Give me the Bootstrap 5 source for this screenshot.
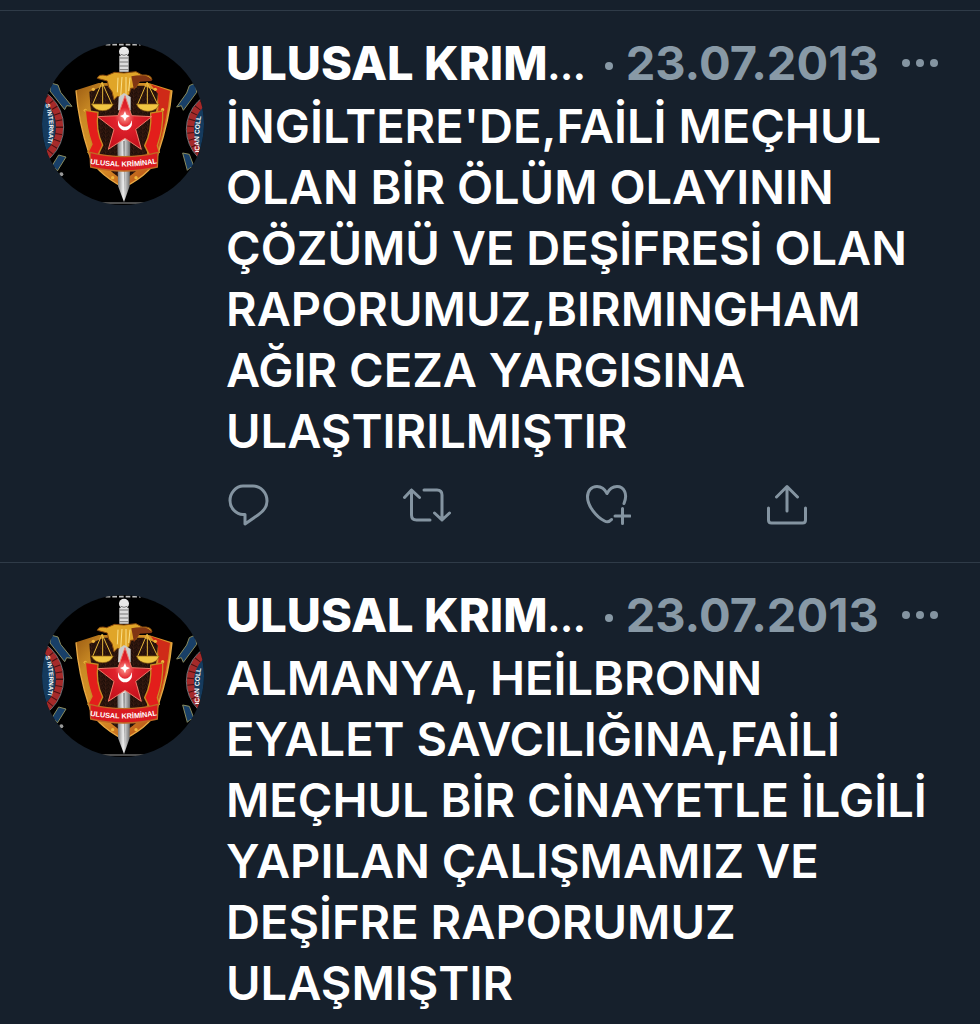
<!DOCTYPE html>
<html lang="tr">
<head>
<meta charset="utf-8">
<meta name="viewport" content="width=device-width, initial-scale=1">
<title>Ulusal Kriminal</title>
<link rel="stylesheet" href="https://cdn.jsdelivr.net/npm/bootstrap@5.3.0/dist/css/bootstrap.min.css">
<style>
  body { background: #16202c; color: #fff; font-family: Inter, "Liberation Sans", sans-serif; }
  .feed { padding-top: 10px; }
  .post { border-top: 1px solid #2f3b48; padding: 20px 40px 34px 42px; gap: 22px; }
  .avatar { width: 162px; height: 162px; margin-top: 12px; }
  .post-head { line-height: 64px; font-size: 47px; }
  .post-name { color: #fff; font-weight: 800; }
  .post-name span { font-size: 36px; line-height: 1; }
  .post-date { color: #8899a6; font-weight: 700; gap: 13px; margin-left: 19px; }
  .post-date i { width: 8px; height: 8px; background: currentColor; margin-top: 6px; }
  .more-btn, .act-btn { color: #8494a1; line-height: 1; }
  .post-text { font-size: 47px; line-height: 61px; font-weight: 600; }
  .actions { margin: 19px -1px 0 -2px; }
  .act-btn svg { fill: none; stroke: currentColor; stroke-width: 3; stroke-linecap: round; stroke-linejoin: round; }
</style>
</head>
<body>
<svg class="position-absolute" width="0" height="0" aria-hidden="true">
  <defs>
    <linearGradient id="gold" x1="0" y1="0" x2="1" y2="1"><stop offset="0" stop-color="#9a5a12"/><stop offset=".2" stop-color="#c98a24"/><stop offset=".5" stop-color="#dd9427"/><stop offset="1" stop-color="#a83a12"/></linearGradient>
    <linearGradient id="blade" x1="0" x2="1" y1="0" y2="0"><stop offset="0" stop-color="#777"/><stop offset=".45" stop-color="#eee"/><stop offset="1" stop-color="#666"/></linearGradient>
    <radialGradient id="starRed" cx=".5" cy=".4" r=".6"><stop offset="0" stop-color="#ff9a90"/><stop offset=".3" stop-color="#e0222c"/><stop offset="1" stop-color="#c4101c"/></radialGradient>
    <pattern id="speck" width="14" height="12" patternUnits="userSpaceOnUse"><rect width="14" height="12" fill="#1d0d08"/><path d="M1 2l4 2M8 1l3 4M3 9l4-2M11 9l2 2" stroke="#6b3520" stroke-width="2"/></pattern>
    <path id="leftArc" d="M34 210Q54 275 38 340"/>
    <path id="rightArc" d="M497 354Q491 290 506 220"/>
    <path id="bannerArc" d="M168 388q104 18 206-2"/>
    <g id="emblem">
      <rect width="540" height="540" fill="#000"/>
      <path d="M215 31h105" stroke="#bbb" stroke-width="5" stroke-dasharray="14 6"/>
      <path d="M185 506h145" stroke="#999" stroke-width="3"/>
      <circle cx="-38" cy="278" r="104" fill="#153b5e"/>
      <circle cx="-38" cy="278" r="115" fill="none" stroke="#a52a2a" stroke-width="22"/>
      <circle cx="-38" cy="278" r="115" fill="none" stroke="#4a1010" stroke-width="22" stroke-dasharray="3 17"/>
      <circle cx="-38" cy="278" r="127" fill="none" stroke="#9aa4ac" stroke-width="2"/>
      <path d="M50 146l22 6 8 22 34 42-16-2-6 12-44-56z" fill="#183f67" stroke="#8a8c60" stroke-width="3"/>
      <path d="M96 368l-22-6-26 42 16-2 6 8z" fill="#183f67" stroke="#8a8c60" stroke-width="3"/>
      <circle cx="82" cy="420" r="6" fill="#999"/>
      <circle cx="575" cy="285" r="100" fill="#153b5e"/>
      <circle cx="575" cy="285" r="106" fill="none" stroke="#a52a2a" stroke-width="22"/>
      <circle cx="575" cy="285" r="106" fill="none" stroke="#4a1010" stroke-width="22" stroke-dasharray="3 17"/>
      <circle cx="575" cy="285" r="118" fill="none" stroke="#9aa4ac" stroke-width="2"/>
      <path d="M484 146l-18 8-8 22-30 42 14-4 6 14 40-54z" fill="#183f67" stroke="#8a8c60" stroke-width="3"/>
      <path d="M446 356l20 4 16 42-14-2-8 8z" fill="#183f67" stroke="#8a8c60" stroke-width="3"/>
      <!-- shield -->
      <path d="M126 168l68-22h150l70 22q-8 90-42 190-8 52-103 102-92-50-104-102-32-98-39-190z" fill="url(#gold)"/>
      <path d="M166 172l44-18h120l42 18q-4 86-32 176-4 50-72 90-66-40-74-90-24-90-28-176z" fill="url(#speck)"/>
      <path d="M350 150l58 20q-8 90-42 188l-12 2q24-100 18-182z" fill="#cf2a18"/>
      <path d="M414 168q-8 90-42 190-8 52-103 102-92-50-104-102-32-98-39-190" fill="none" stroke="#e8a944" stroke-width="4"/>
      <g fill="#efb53c"><circle cx="178" cy="165" r="5"/><circle cx="364" cy="165" r="5"/><circle cx="154" cy="228" r="5"/><circle cx="386" cy="226" r="5"/><circle cx="236" cy="430" r="5"/><circle cx="306" cy="430" r="5"/></g>
      <path d="M154 228l38 6q-8 54 14 98l-16 34-28-12 12-24q-16-44-20-102zM386 230l-36 6q4 54-18 98l16 32 28-12-6-20q18-50 16-104z" fill="#e31e1b" stroke="#c98b23" stroke-width="4"/>
      <!-- eagle and scales -->
      <path d="M190 132q4-14 28-8l24-10 28 2 36-4 18 10q28-2 30 14l-36 2-12 22-16 2-4 18-14 12-22-6-10 10-6-24-10-14-4-18z" fill="#e0a528" stroke="#8b4b0e" stroke-width="3"/>
      <path d="M292 126q54-10 62 14l-38 2-16 26z" fill="#813513"/>
      <path d="M252 130l-2 44M264 128l-4 60M276 128v58M288 130l-4 40" stroke="#fae08a" stroke-width="3"/>
      <path d="M204 144l-28 66M204 144l30 66M206 144v68M339 144l-28 66M339 144l32 66M340 144v68" fill="none" stroke="#e8b93c" stroke-width="3"/>
      <path d="M172 209h66q-8 20-32 20t-34-20zM307 209h69q-8 22-34 22t-35-22z" fill="#f0c542" stroke="#8a5b10" stroke-width="2"/>
      <!-- sword -->
      <path d="M256 64h28v48h-28z" fill="#dcdcdc"/><path d="M256 71h28M256 83h28M256 95h28M256 106h28" stroke="#777" stroke-width="3"/>
      <circle cx="270" cy="52" r="15" fill="#e8e8e8"/><path d="M260 60q10 6 20 0" fill="none" stroke="#777" stroke-width="3"/>
      <path d="M254 188l16-12 20 12v40h-38z" fill="#ccc"/>
      <path d="M250 310h39l-2 145-17 48-18-48z" fill="url(#blade)"/>
      <path d="M268 320h4l-1 160z" fill="#777"/>
      <path d="M273 184l20 60 60 3-48 38 17 60-49-33-50 33 17-60-49-38 61-3z" fill="url(#starRed)" stroke="#f07a68" stroke-width="3"/>
      <path d="M254 258a21 21 0 1 0 38 0 17 17 0 1 1-38 0z" fill="#fff"/>
      <path d="M273 230l4 11 11 4-11 5-4 11-5-11-10-5 10-4z" fill="#fff"/>
      <!-- banner -->
      <path d="M168 354q104 26 204 0l-2 44q-100 24-200 0z" fill="#d91b20" stroke="#c06a24" stroke-width="4"/>
    </g>
  </defs>
</svg>

<main class="feed container-fluid px-0">
  <article class="post d-flex">
    <svg class="avatar rounded-circle flex-shrink-0" viewBox="24 26 486 486" role="img" aria-label="Ulusal Kriminal">
      <use href="#emblem"/>
      <g fill="#fff" font-family="Liberation Sans" font-weight="700">
        <text font-size="22"><textPath href="#bannerArc">ULUSAL KRİMİNAL</textPath></text>
        <text font-size="19"><textPath href="#leftArc">S INTERNATI</textPath></text>
        <text font-size="20"><textPath href="#rightArc">ICAN COLL</textPath></text>
      </g>
    </svg>
    <div class="flex-grow-1">
      <header class="post-head d-flex align-items-center">
        <a href="#" class="post-name text-decoration-none">ULUSAL KRIM<span>...</span></a>
        <span class="post-date d-flex align-items-center"><i class="rounded-circle"></i><time datetime="2013-07-23">23.07.2013</time></span>
        <button type="button" class="more-btn btn border-0 p-0 ms-auto" aria-label="Diğer"><svg class="d-block" width="40" height="12" fill="currentColor"><circle cx="6" cy="6" r="4"/><circle cx="20" cy="6" r="4"/><circle cx="34" cy="6" r="4"/></svg></button>
      </header>
      <p class="post-text mb-0">İNGİLTERE'DE,FAİLİ MEÇHUL<br>OLAN BİR ÖLÜM OLAYININ<br>ÇÖZÜMÜ VE DEŞİFRESİ OLAN<br>RAPORUMUZ,BIRMINGHAM<br>AĞIR CEZA YARGISINA<br>ULAŞTIRILMIŞTIR</p>
      <div class="actions row gx-0">
        <div class="col-3"><button type="button" class="act-btn btn border-0 p-0" aria-label="Yanıtla"><svg width="48" height="48" viewBox="0 0 48 48"><path d="M19 6h10c8 0 14 7 14 15 0 6-3 10-9 14l-13 9V34.500h-2C12 34.500 6 28 6 20.500S12 6 19 6z"/></svg></button></div>
        <div class="col-3"><button type="button" class="act-btn btn border-0 p-0" aria-label="Retweet"><svg width="48" height="48" viewBox="0 0 48 48"><path d="M1.500 17.500L8.500 10l8 7.500M8.500 10v25q0 5 5 5h13.500M21 10h13q5 0 5 5v25M31.500 33l7.500 7 7.500-7"/></svg></button></div>
        <div class="col-3"><button type="button" class="act-btn btn border-0 p-0" aria-label="Beğen"><svg width="48" height="48" viewBox="0 0 48 48"><path d="M41 23.500C45 14 41 6.500 34 6.500c-5 0-8 3-10 7-2-4-5-7-10-7C8 6.500 4.500 11 4.500 17c0 9 9 20 17 24q4 2 7-1.500M39.500 28.500v15M32 36h15"/></svg></button></div>
        <div class="col-3"><button type="button" class="act-btn btn border-0 p-0" aria-label="Paylaş"><svg width="48" height="48" viewBox="0 0 48 48"><path d="M25 31V6.500M14.500 17L25 6.500 35.500 17M6.500 28v12q0 3 3 3h31q3 0 3-3V28"/></svg></button></div>
      </div>
    </div>
  </article>

  <article class="post d-flex">
    <svg class="avatar rounded-circle flex-shrink-0" viewBox="24 26 486 486" role="img" aria-label="Ulusal Kriminal">
      <use href="#emblem"/>
      <g fill="#fff" font-family="Liberation Sans" font-weight="700">
        <text font-size="22"><textPath href="#bannerArc">ULUSAL KRİMİNAL</textPath></text>
        <text font-size="19"><textPath href="#leftArc">S INTERNATI</textPath></text>
        <text font-size="20"><textPath href="#rightArc">ICAN COLL</textPath></text>
      </g>
    </svg>
    <div class="flex-grow-1">
      <header class="post-head d-flex align-items-center">
        <a href="#" class="post-name text-decoration-none">ULUSAL KRIM<span>...</span></a>
        <span class="post-date d-flex align-items-center"><i class="rounded-circle"></i><time datetime="2013-07-23">23.07.2013</time></span>
        <button type="button" class="more-btn btn border-0 p-0 ms-auto" aria-label="Diğer"><svg class="d-block" width="40" height="12" fill="currentColor"><circle cx="6" cy="6" r="4"/><circle cx="20" cy="6" r="4"/><circle cx="34" cy="6" r="4"/></svg></button>
      </header>
      <p class="post-text mb-0">ALMANYA, HEİLBRONN<br>EYALET SAVCILIĞINA,FAİLİ<br>MEÇHUL BİR CİNAYETLE İLGİLİ<br>YAPILAN ÇALIŞMAMIZ VE<br>DEŞİFRE RAPORUMUZ<br>ULAŞMIŞTIR</p>
    </div>
  </article>
</main>
<script src="https://cdn.jsdelivr.net/npm/bootstrap@5.3.0/dist/js/bootstrap.bundle.min.js"></script>
</body>
</html>
